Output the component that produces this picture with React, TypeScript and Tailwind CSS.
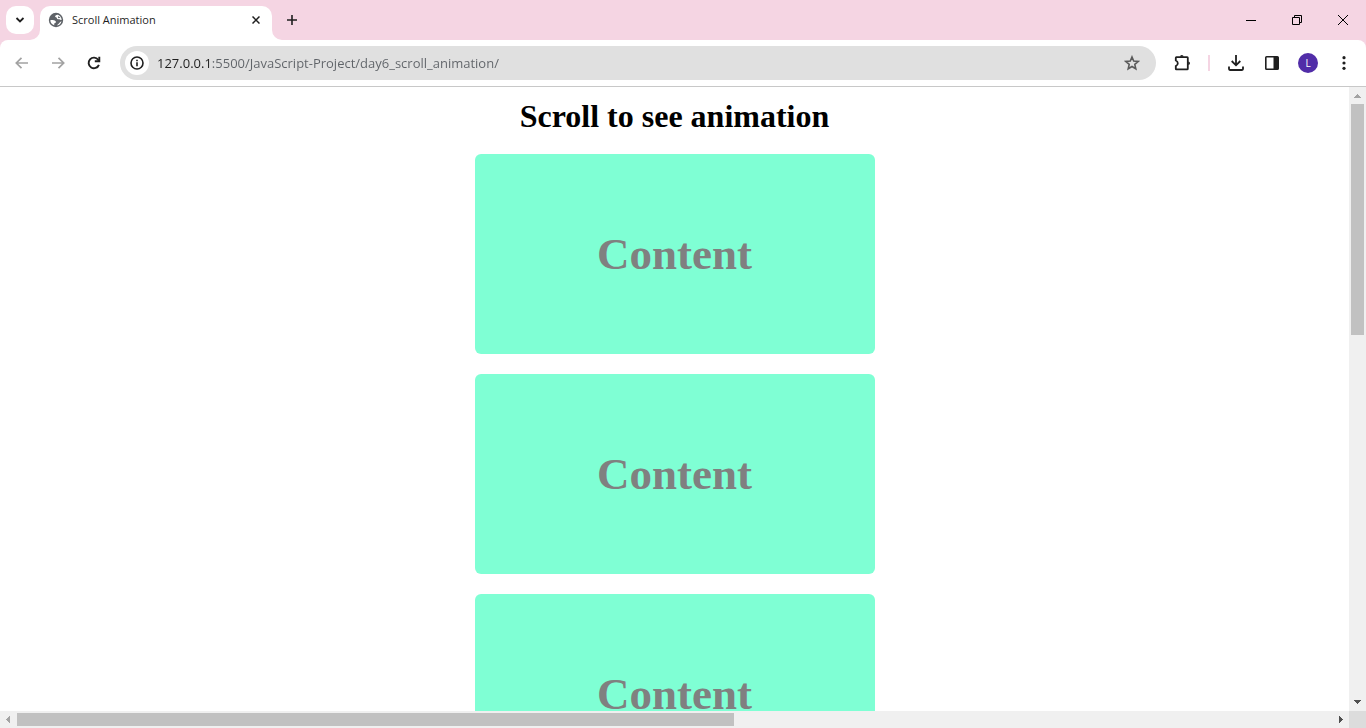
import type { ReactNode } from "react";

const cards = ["first", "second", "third"];

function ToolButton({ label, children }: { label: string; children: ReactNode }) {
  return (
    <button aria-label={label} className="flex h-9 w-9 shrink-0 items-center justify-center rounded-full">
      {children}
    </button>
  );
}

function WindowButton({ label, children }: { label: string; children: ReactNode }) {
  return (
    <button aria-label={label} className="flex h-10 w-[46px] items-center justify-center">
      <svg width="10" height="10" viewBox="0 0 10 10" fill="none" stroke="#000">
        {children}
      </svg>
    </button>
  );
}

function TabStrip() {
  return (
    <header className="flex h-10 shrink-0 items-center bg-[#f5d5e3] pl-1.5">
      <button aria-label="Search tabs" className="flex h-7 w-7 items-center justify-center rounded-[10px] bg-white">
        <svg width="10" height="6" viewBox="0 0 10 6" fill="none" stroke="#1f1f1f" strokeWidth="1.8">
          <path d="M1.5 1 5 4.5 8.5 1" />
        </svg>
      </button>
      <div className="relative ml-1.5 flex h-[34px] w-[232px] items-center self-end rounded-t-[10px] bg-white px-2 pb-1.5">
        <svg className="absolute bottom-0 -left-2.5" width="10" height="10" viewBox="0 0 10 10" fill="#fff">
          <path d="M10 0V10H0A10 10 0 0 0 10 0Z" />
        </svg>
        <svg className="absolute -right-2.5 bottom-0" width="10" height="10" viewBox="0 0 10 10" fill="#fff">
          <path d="M0 0V10H10A10 10 0 0 1 0 0Z" />
        </svg>
        <svg className="shrink-0" width="16" height="16" viewBox="0 0 16 16">
          <circle cx="8" cy="8" r="7.2" fill="#5f6368" />
          <path
            d="M2.300 8.200C3.800 7.800 6.200 8 7.400 8.900C8.300 9.700 8 10.700 7 11C6.200 11.300 6.100 11.900 6.300 13.200C4 12.500 2.400 10.700 2.300 8.200Z"
            fill="#fff"
          />
          <path
            d="M9.800 2.700C8.600 2.600 7 3.400 7.100 4.600C7.200 5.600 8.700 5.300 8.900 6.200C9.100 7.300 10.200 7.500 11 7.200C11.900 6.900 12.500 8 13.600 8C13.600 5.500 12 3.400 9.800 2.700ZM10.200 4.200C11.500 4.800 12.200 5.500 12.400 6.300C11.800 5.900 10.900 6.100 10.400 6.200C10 5.600 9.800 4.900 10.200 4.200Z"
            fill="#fff"
            fillRule="evenodd"
          />
          <path d="M13.500 9.200C13 11.500 11.300 13.200 9.200 13.600C9.100 12.700 10.300 12.400 10.900 11.600C11.500 10.800 12.200 9.500 13.500 9.200Z" fill="#fff" />
        </svg>
        <span className="ml-2 flex-1 font-['Open_Sans',sans-serif] text-[11px] leading-4 whitespace-nowrap text-[#1f1f1f]">
          Scroll Animation
        </span>
        <button aria-label="Close tab" className="flex h-4 w-4 items-center justify-center">
          <svg width="8" height="8" viewBox="0 0 8 8" fill="none" stroke="#1f1f1f" strokeWidth="1.5">
            <path d="M.5 .5 7.5 7.5M7.5 .5 .5 7.5" />
          </svg>
        </button>
      </div>
      <button aria-label="New tab" className="ml-1.5 flex h-7 w-7 items-center justify-center">
        <svg width="10" height="10" viewBox="0 0 10 10" fill="none" stroke="#1f1f1f" strokeWidth="1.6">
          <path d="M5 0V10M0 5H10" />
        </svg>
      </button>
      <div className="ml-auto flex">
        <WindowButton label="Minimize">
          <path d="M0 5.5H10" />
        </WindowButton>
        <WindowButton label="Restore">
          <path d="M.5 2.5H7.5V9.5H.5ZM2.5 2.5V.5H9.5V7.5H7.5" />
        </WindowButton>
        <WindowButton label="Close">
          <path d="M0 0 10 10M10 0 0 10" />
        </WindowButton>
      </div>
    </header>
  );
}

function Toolbar() {
  return (
    <div className="shrink-0 bg-[#f5d5e3]">
      <div className="flex h-[47px] items-center rounded-t-lg border-b border-[#c8c8c8] bg-white px-1">
        <ToolButton label="Back">
          <svg width="14" height="12" viewBox="0 0 14 12" fill="none" stroke="#a2a2a2" strokeWidth="1.7">
            <path d="M13 6H2M6.5 .8 1.3 6 6.5 11.2" />
          </svg>
        </ToolButton>
        <ToolButton label="Forward">
          <svg width="14" height="12" viewBox="0 0 14 12" fill="none" stroke="#a2a2a2" strokeWidth="1.7">
            <path d="M1 6H12M7.5 .8 12.7 6 7.5 11.2" />
          </svg>
        </ToolButton>
        <ToolButton label="Reload">
          <svg width="14" height="14" viewBox="0 0 14 14" fill="none" stroke="#1f1f1f" strokeWidth="1.9">
            <path d="M11.900 8.800A5.300 5.300 0 1 1 11.200 3.800L12.200 5" />
            <path d="M12.300 .8V5.300H7.800" />
          </svg>
        </ToolButton>
        <div className="ml-2 flex h-[34px] flex-1 items-center rounded-full bg-[#e0e0e0] pr-3 pl-[5px]">
          <button aria-label="Site information" className="flex h-6 w-6 shrink-0 items-center justify-center rounded-full bg-white">
            <svg width="14" height="14" viewBox="0 0 14 14" fill="none" stroke="#1f1f1f" strokeWidth="1.6">
              <circle cx="7" cy="7" r="6" />
              <path d="M7 6.2V10.2M7 3.7V5.2" />
            </svg>
          </button>
          <input
            aria-label="Address"
            type="text"
            defaultValue="127.0.0.1:5500/JavaScript-Project/day6_scroll_animation/"
            className="ml-2 h-6 min-w-0 flex-1 bg-[linear-gradient(90deg,#1f1f1f_54px,#5f6368_54px)] bg-clip-text font-['Open_Sans',sans-serif] text-[13px] text-transparent caret-black outline-none"
          />
          <button aria-label="Bookmark this tab" className="flex h-6 w-6 items-center justify-center">
            <svg width="16" height="16" viewBox="0 0 16 16" fill="none" stroke="#5a5a5a" strokeWidth="1.6">
              <path d="M8 2 9.700 6.100 14.100 6.500 10.800 9.400 11.800 13.800 8 11.500 4.200 13.800 5.200 9.400 1.900 6.500 6.300 6.100Z" />
            </svg>
          </button>
        </div>
        <div className="ml-2 flex items-center">
          <ToolButton label="Extensions">
            <svg width="18" height="18" viewBox="0 0 18 18">
              <path
                d="M2.800 3.800Q2.800 3.200 3.400 3.200H14.200Q14.800 3.200 14.800 3.800V14.800Q14.800 15.400 14.200 15.400H3.400Q2.800 15.400 2.800 14.800V12.100C4.100 11.600 4.800 10.600 4.800 9.300S4.100 7 2.800 6.500Z"
                fill="none"
                stroke="#1f1f1f"
                strokeWidth="1.800"
              />
              <path d="M7 2.800A1.800 1.800 0 0 1 10.600 2.800ZM15.200 7.500A1.800 1.800 0 0 1 15.200 11.100Z" fill="#1f1f1f" />
            </svg>
          </ToolButton>
          <div className="mx-2 h-4 w-0.5 bg-[#f5d5e3]" />
          <ToolButton label="Downloads">
            <svg width="16" height="16" viewBox="0 0 16 16" fill="none" stroke="#1f1f1f" strokeWidth="1.8">
              <path d="M8 0V10M3.700 6 8 10.300 12.300 6M1 11.500V14.100Q1 15 1.900 15H14.100Q15 15 15 14.100V11.500" />
            </svg>
          </ToolButton>
          <ToolButton label="Side panel">
            <svg width="14" height="14" viewBox="0 0 14 14">
              <rect x=".8" y=".8" width="12.400" height="12.400" rx=".8" fill="none" stroke="#1f1f1f" strokeWidth="1.600" />
              <path d="M8.500 1H13V13H8.500Z" fill="#1f1f1f" />
            </svg>
          </ToolButton>
          <ToolButton label="Profile">
            <span className="flex h-5 w-5 items-center justify-center rounded-full bg-[#512da8] font-['Open_Sans',sans-serif] text-[10px] text-white">
              L
            </span>
          </ToolButton>
          <ToolButton label="Menu">
            <svg width="4" height="14" viewBox="0 0 4 14" fill="#1f1f1f">
              <circle cx="2" cy="1.700" r="1.600" />
              <circle cx="2" cy="7" r="1.600" />
              <circle cx="2" cy="12.300" r="1.600" />
            </svg>
          </ToolButton>
        </div>
      </div>
    </div>
  );
}

function VerticalScrollbar() {
  return (
    <div className="flex w-[17px] shrink-0 flex-col items-center bg-[#f0f0f0]">
      <svg className="shrink-0" width="17" height="17" viewBox="0 0 17 17" fill="#a3a3a3" shapeRendering="crispEdges">
        <path d="M5 11 8.500 7 12 11Z" />
      </svg>
      <div className="min-h-0 w-[13px] flex-1">
        <div className="h-[39.2%] bg-[#c1c1c1]" />
      </div>
      <svg className="shrink-0" width="17" height="17" viewBox="0 0 17 17" fill="#505050" shapeRendering="crispEdges">
        <path d="M5 6 8.500 10 12 6Z" />
      </svg>
    </div>
  );
}

function HorizontalScrollbar() {
  return (
    <div className="flex h-[17px] shrink-0 bg-[#f0f0f0]">
      <svg className="shrink-0" width="17" height="17" viewBox="0 0 17 17" fill="#a3a3a3" shapeRendering="crispEdges">
        <path d="M10 5 6 8.500 10 12Z" />
      </svg>
      <div className="min-w-0 flex-1 py-0.5">
        <div className="h-[13px] w-[54.5%] bg-[#c1c1c1]" />
      </div>
      <svg className="shrink-0" width="17" height="17" viewBox="0 0 17 17" fill="#505050" shapeRendering="crispEdges">
        <path d="M7 5 11 8.500 7 12Z" />
      </svg>
      <div className="w-[17px] shrink-0 bg-[#dcdcdc]" />
    </div>
  );
}

export default function App() {
  return (
    <div className="flex h-screen flex-col overflow-hidden bg-white">
      <TabStrip />
      <Toolbar />
      <div className="flex min-h-0 flex-1">
        <main className="flex min-w-0 flex-1 flex-col items-center gap-5 overflow-hidden pt-3 font-['Liberation_Serif',serif]">
          <h1 className="shrink-0 text-[32px] leading-[35px] font-bold text-black">Scroll to see animation</h1>
          {cards.map((card) => (
            <section
              key={card}
              className="flex h-[200px] w-[400px] shrink-0 items-center justify-center rounded-md bg-[#7fffd4]"
            >
              <h2 className="text-[45px] leading-[52px] font-bold text-[#808080]">Content</h2>
            </section>
          ))}
        </main>
        <VerticalScrollbar />
      </div>
      <HorizontalScrollbar />
    </div>
  );
}
